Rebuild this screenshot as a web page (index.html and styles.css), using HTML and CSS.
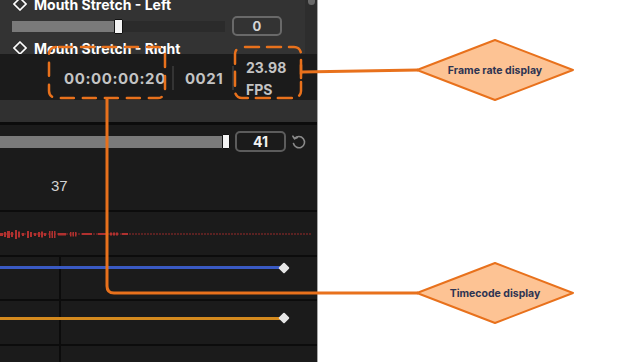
FILE: index.html
```html
<!DOCTYPE html>
<html>
<head>
<meta charset="utf-8">
<link rel="stylesheet" href="styles.css">
</head>
<body>
<div class="panel">
  <section class="morph">
    <div class="morph-list">
      <div class="shape-row first">
        <svg class="key" width="14" height="14" viewBox="0 0 14 14"><polygon points="7,1 13,7 7,13 1,7" fill="none" stroke="#fff" stroke-width="1.6"/></svg>
        <span>Mouth Stretch - Left</span>
      </div>
      <div class="slider-row">
        <div class="track">
          <div class="fill" style="width:102px"></div>
          <div class="thumb"></div>
          <div class="rest"></div>
        </div>
        <div class="value">0</div>
      </div>
      <div class="shape-row">
        <svg class="key" width="14" height="14" viewBox="0 0 14 14"><polygon points="7,1 13,7 7,13 1,7" fill="none" stroke="#fff" stroke-width="1.6"/></svg>
        <span>Mouth Stretch - Right</span>
      </div>
    </div>
    <div class="scrollbar"><div class="scroll-thumb"></div></div>
  </section>

  <section class="transport">
    <span class="timecode">00:00:00:20</span>
    <span class="sep"></span>
    <span class="frames">0021</span>
    <span class="sep"></span>
    <span class="fps"><span>23.98</span><span>FPS</span></span>
  </section>

  <section class="tabs"></section>

  <section class="param">
    <div class="slider-row wide">
      <div class="track big">
        <div class="fill grow"></div>
        <div class="thumb"></div>
      </div>
      <div class="value strong">41</div>
      <svg class="reset" width="16" height="16" viewBox="0 0 16 16" fill="none" stroke="#8a8a8a" stroke-width="1.6" stroke-linecap="round" stroke-linejoin="round">
        <path d="M3.6 4.6 A5.6 5.6 0 1 1 2.5 9.5"/>
        <path d="M1.9 2.2 L3.6 4.8 L6.3 3.6"/>
      </svg>
    </div>
    <div class="frame-num">37</div>
  </section>

  <section class="wave">
    <svg width="317" height="43" viewBox="0 0 317 43">
      <line x1="0" y1="22" x2="312" y2="22" stroke="#9a2b2b" stroke-width="1" stroke-dasharray="2 1"/>
      <g fill="#b0312f">
        <rect x="0" y="21" width="3" height="3"/>
        <rect x="4" y="20" width="2" height="5"/>
        <rect x="7" y="19" width="3" height="7"/>
        <rect x="11" y="20" width="2" height="5"/>
        <rect x="15" y="18" width="2" height="9"/>
        <rect x="18" y="19.5" width="2" height="6"/>
        <rect x="22" y="21" width="2" height="3"/>
        <rect x="27" y="19" width="2" height="7"/>
        <rect x="30" y="20" width="2" height="5"/>
        <rect x="34" y="21" width="2" height="3"/>
        <rect x="38" y="20" width="2" height="5"/>
        <rect x="41" y="19.5" width="2" height="6"/>
        <rect x="44" y="21" width="2" height="3"/>
        <rect x="49" y="19" width="1.5" height="7"/>
        <rect x="51.5" y="19" width="1.5" height="7"/>
        <rect x="54" y="19" width="1.5" height="7"/>
        <rect x="58" y="21" width="8" height="2.5"/>
        <rect x="70" y="20" width="1.5" height="4.5"/>
        <rect x="72.5" y="20" width="1.5" height="4.5"/>
        <rect x="75" y="20" width="1.5" height="4.5"/>
        <rect x="82" y="21" width="10" height="2"/>
        <rect x="98" y="21" width="8" height="2"/>
        <rect x="110" y="20.5" width="2" height="3"/>
        <rect x="113" y="20.5" width="2" height="3"/>
        <rect x="116" y="20.5" width="2" height="3"/>
        <rect x="122" y="21" width="6" height="2"/>
      </g>
    </svg>
  </section>

  <section class="tracks">
    <div class="vline"></div>
    <div class="lane lane-1"><div class="curve blue"></div><div class="kf"></div></div>
    <div class="hsep hsep-1"></div>
    <div class="lane lane-2"><div class="curve amber"></div><div class="kf"></div></div>
    <div class="hsep hsep-2"></div>
  </section>
</div>
<div class="canvas"></div>

<svg class="annotations" width="619" height="362" viewBox="0 0 619 362">
  <g fill="none" stroke="#e8711c" stroke-width="2.5" stroke-linecap="round">
    <rect x="49" y="47" width="116" height="51" rx="7" stroke-dasharray="13 9" stroke-dashoffset="-3"/>
    <rect x="235" y="47" width="66" height="51" rx="7" stroke-dasharray="14 8" stroke-dashoffset="-3"/>
    <path d="M301 65 V78"/>
  </g>
  <g fill="none" stroke="#e8711c" stroke-width="3">
    <path d="M301 72 L418 70"/>
    <path d="M107 99 V286 Q107 293 114 293 H418"/>
  </g>
  <g fill="#fdc394" stroke="#e8711c" stroke-width="2" stroke-linejoin="round">
    <polygon points="417,70 495,40 573,70 495,100"/>
    <polygon points="417,293 495,263 573,293 495,323"/>
  </g>
  <g class="label">
    <text x="495" y="74">Frame rate display</text>
    <text x="495" y="297">Timecode display</text>
  </g>
</svg>
</body>
</html>
```

FILE: styles.css
```css
* { box-sizing: border-box; }

html, body {
  margin: 0;
  padding: 0;
}

body {
  width: 619px;
  height: 362px;
  overflow: hidden;
  background: #ffffff;
  position: relative;
  display: flex;
  font-family: Inter, "Liberation Sans", sans-serif;
}

.panel {
  width: 318px;
  height: 362px;
  flex-shrink: 0;
  display: flex;
  flex-direction: column;
  background: #1b1b1b;
  border-right: 1px solid #a8a8a8;
  overflow: hidden;
}

.canvas { flex: 1; }

/* morph list */
.morph {
  height: 54px;
  flex-shrink: 0;
  background: #333333;
  display: flex;
  overflow: hidden;
}

.morph-list {
  flex: 1;
  display: flex;
  flex-direction: column;
}

.shape-row {
  height: 20px;
  flex-shrink: 0;
  display: flex;
  align-items: center;
  gap: 7px;
  padding-left: 13px;
  color: #ffffff;
  font-weight: 700;
  font-size: 14px;
  white-space: nowrap;
}

.shape-row.first { margin-top: -6px; }

.key { flex-shrink: 0; }

.slider-row {
  height: 24px;
  flex-shrink: 0;
  display: flex;
  align-items: center;
  padding-left: 12px;
}

.track {
  width: 213px;
  height: 11px;
  display: flex;
  align-items: center;
  background: #2b2b2b;
  flex-shrink: 0;
}

.fill {
  height: 100%;
  background: #7a7a7a;
  flex-shrink: 0;
}

.thumb {
  width: 9px;
  height: 15px;
  flex-shrink: 0;
  background: #f4f4f4;
  border: 1px solid #111;
  border-radius: 1px;
}

.rest { flex: 1; }

.value {
  margin-left: 7px;
  width: 50px;
  height: 20px;
  border: 2px solid #696969;
  border-radius: 5px;
  display: flex;
  align-items: center;
  justify-content: center;
  color: #d6d6d6;
  font-weight: 700;
  font-size: 13px;
}

.scrollbar {
  width: 12px;
  flex-shrink: 0;
  background: #2d2d2d;
}

.scroll-thumb {
  margin: -3px 0 0 3px;
  width: 7px;
  height: 8px;
  border-radius: 4px;
  background: #6a6a6a;
}

/* transport bar */
.transport {
  height: 46px;
  flex-shrink: 0;
  background: #1b1b1b;
  display: flex;
  align-items: center;
  padding: 2px 0 0 64px;
  color: #c4c4c4;
  font-weight: 700;
  font-size: 15px;
  white-space: nowrap;
}

.timecode {
  width: 98px;
  letter-spacing: 0.6px;
}

.sep {
  width: 2px;
  height: 24px;
  background: #343434;
  margin-left: 10px;
  flex-shrink: 0;
}

.frames {
  margin-left: 11px;
  width: 37px;
  letter-spacing: 0.5px;
}

.fps {
  margin-left: 12px;
  display: flex;
  flex-direction: column;
  font-size: 14px;
  line-height: 22px;
  margin-top: 2px;
}

/* tabs strip */
.tabs {
  height: 25px;
  flex-shrink: 0;
  background: #303030;
  border-bottom: 3px solid #0c0c0c;
}

/* parameter slider */
.param {
  height: 87px;
  flex-shrink: 0;
  background: #1b1b1b;
  border-bottom: 2px solid #0c0c0c;
  padding-top: 6px;
}

.slider-row.wide {
  height: 21px;
  padding-left: 0;
}

.track.big {
  width: 230px;
  height: 12px;
  background: #808080;
}

.fill.grow { flex: 1; }

.track.big .thumb { width: 8px; }

.value.strong {
  margin-left: 5px;
  width: 51px;
  height: 21px;
  border-color: #5c5c5c;
  color: #f2f2f2;
  font-size: 14px;
}

.reset {
  margin-left: 5px;
  flex-shrink: 0;
}

.frame-num {
  margin-top: 25px;
  padding-left: 51px;
  font-family: "Liberation Sans", Arial, sans-serif;
  font-size: 15px;
  line-height: 17px;
  color: #d2d2d2;
}

/* waveform */
.wave {
  height: 45px;
  flex-shrink: 0;
  background: #1b1b1b;
  border-bottom: 2px solid #0c0c0c;
}

.wave svg { display: block; }

/* tracks */
.tracks {
  flex: 1;
  display: grid;
  grid-template-columns: 59px 2px 1fr;
  grid-template-rows: 42px 2px 43px 2px 1fr;
  background: #1b1b1b;
}

.vline {
  grid-column: 2;
  grid-row: 1 / -1;
  background: #0c0c0c;
}

.hsep {
  grid-column: 1 / -1;
  background: #0c0c0c;
}

.hsep-1 { grid-row: 2; }
.hsep-2 { grid-row: 4; }

.lane {
  grid-column: 1 / -1;
  display: flex;
  align-items: center;
  align-self: start;
}

.lane-1 { grid-row: 1; height: 21px; }
.lane-2 { grid-row: 3; height: 34px; }

.curve {
  width: 281px;
  height: 3px;
  flex-shrink: 0;
}

.curve.blue { background: #3a5ac4; }
.curve.amber { background: #d48a1e; }

.kf {
  width: 8px;
  height: 8px;
  margin-left: -1px;
  background: #e6e6e6;
  transform: rotate(45deg);
  border-radius: 1px;
  flex-shrink: 0;
}

/* annotation overlay */
.annotations {
  position: absolute;
  left: 0;
  top: 0;
  pointer-events: none;
}

.label text {
  font-family: Inter, "Liberation Sans", sans-serif;
  font-weight: 700;
  font-size: 10.5px;
  fill: #2e3452;
  text-anchor: middle;
}
```
